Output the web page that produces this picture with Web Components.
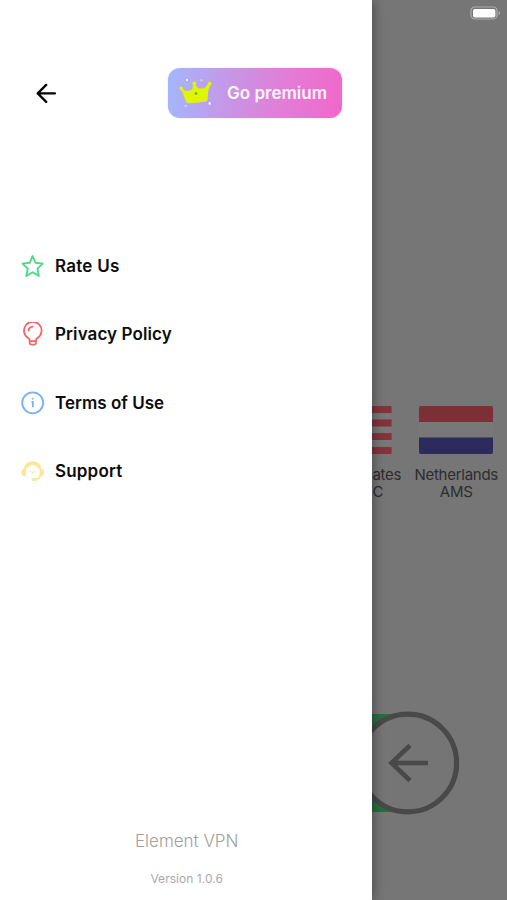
<!DOCTYPE html>
<html lang="en">
<head>
<meta charset="utf-8">
<title>Element VPN</title>
<style>
html,body{margin:0;height:100%;overflow:hidden;background:#767676}
body{font-family:Inter,"Liberation Sans",sans-serif}
</style>
</head>
<body>
<vpn-app></vpn-app>
<script>
const define = (name, html) => customElements.define(name, class extends HTMLElement {
  constructor() {
    super();
    const t = document.createElement('template');
    t.innerHTML = html;
    this.attachShadow({ mode: 'open' }).append(t.content.cloneNode(true));
  }
});

define('back-arrow', `
<style>:host{display:block;width:20px;height:20px}svg{display:block}</style>
<svg width="20" height="20" viewBox="0 0 20 20" fill="none" stroke="#050505" stroke-width="2.3" stroke-linecap="round" stroke-linejoin="round"><path d="M19 10.4H2M10.2 1.9L1.7 10.4l8.5 8.5"/></svg>`);

define('premium-button', `
<style>
:host{display:flex;align-items:center;box-sizing:border-box;width:174px;height:50px;border-radius:12px;padding-left:8px;
background:linear-gradient(97deg,#a5b5fb 3%,#c894e4 38%,#e37cd5 68%,#f068cc 98%);box-shadow:0 0 1px #c9a5e8}
svg{flex:none}
span{margin-left:12px;color:#fff4ff;font-size:17px;font-weight:600;line-height:22px;letter-spacing:.02px;white-space:nowrap}
</style>
<svg width="39" height="34" viewBox="0 0 39 34"><path d="M4.2 12.4L6.2 11.6Q8 15 10 15 14 14.8 16.4 13.2L17.2 8 19.6 8Q20.4 12.4 23.6 12.6L28.6 12.2 32.4 7.6 34.8 8Q33.2 11.6 32.4 14L31.4 24.4Q30.5 25.8 26 25.8L11.4 27Q10.2 26.6 9.6 24.4L6.8 17Z" fill="#e2f500"/><path d="M11.6 26.6Q21 26.8 31 24.4" fill="none" stroke="#dce456" stroke-width="1.2"/><g fill="#e2f500"><circle cx="5.2" cy="12.4" r="1.8"/><circle cx="18.3" cy="7.4" r="2"/><circle cx="33.7" cy="7.6" r="1.9"/></g><circle cx="20" cy="17.5" r="1.4" fill="#57bd3c"/><g fill="#fff"><circle cx="11" cy="4" r="1.1"/><circle cx="33.7" cy="27.4" r="1.2"/><circle cx="25.5" cy="4.2" r="1.3" opacity=".35"/><circle cx="9.6" cy="30" r="1.3" opacity=".35"/></g></svg>
<span><slot></slot></span>`);

define('menu-item', `
<style>
:host{display:flex;align-items:center;height:24px;gap:10px}
::slotted(svg){display:block;flex:none}
span{font-size:17px;font-weight:600;line-height:24px;letter-spacing:var(--track,.1px);color:#0c0c0c;white-space:nowrap}
</style>
<slot name="icon"></slot><span><slot></slot></span>`);

define('side-drawer', `
<style>
:host{display:flex;flex-direction:column;box-sizing:border-box;width:372.4px;height:900px;background:#fff;padding-top:68px;position:relative;z-index:2;box-shadow:1px 0 10px rgba(0,0,0,.3),0 0 14px rgba(0,0,0,.13)}
header{display:flex;align-items:center;justify-content:space-between;padding:0 30.4px 0 36px}
nav{display:flex;flex-direction:column;gap:44.4px;padding:136px 0 0 21px}
.rate{--track:.24px}.terms{--track:.02px}.support{--track:.18px}
footer{margin-top:auto;text-align:center;color:#aaa;padding-bottom:12px}
h1{font-size:17px;font-weight:300;line-height:22px;margin:0 0 18.2px;letter-spacing:0;padding-left:1px;color:#a0a0a0}
p{font-size:12px;line-height:18px;margin:0;letter-spacing:.05px;padding-left:1px}
</style>
<header><back-arrow></back-arrow><premium-button>Go premium</premium-button></header>
<nav>
<menu-item class="rate"><svg slot="icon" width="24" height="24" viewBox="0 0 24 24" fill="none" stroke="#4cda87" stroke-width="1.9" stroke-linejoin="round"><path d="M11.6 2L14.5 8.8l7.3.8-5.4 5 1.5 7.3-6.3-3.7-6.3 3.7 1.5-7.3-5.4-5 7.3-.8Z"/></svg>Rate Us</menu-item>
<menu-item><svg slot="icon" width="24" height="24" viewBox="0 0 24 24" fill="none" stroke="#f56364" stroke-width="1.8" stroke-linecap="round" stroke-linejoin="round"><path d="M8.6 19.2v-1.1Q8.4 16.8 6.8 15.8A8.8 8.8 0 1 1 16.8 15.8Q15.2 16.8 15 18.1v1.1ZM8.7 19.2v1.7a1.8 1.8 0 0 0 1.8 1.8h2.6a1.8 1.8 0 0 0 1.8-1.8v-1.7M7.5 8.6a4.5 4.5 0 0 1 4.1-4"/></svg>Privacy Policy</menu-item>
<menu-item class="terms"><svg slot="icon" width="24" height="24" viewBox="0 0 24 24" fill="none" stroke="#78aff5" stroke-width="1.8"><circle cx="11.7" cy="11.8" r="10.5"/><path d="M10.5 10.8h1.3v5.4"/><circle cx="11.7" cy="7.7" r=".6" stroke-width="1"/></svg>Terms of Use</menu-item>
<menu-item class="support"><svg slot="icon" width="24" height="24" viewBox="0 0 24 24" fill="none" stroke="#fae797" stroke-width="1.8" stroke-linecap="round"><path d="M4 10C4.6 5.2 7.8 3.2 11.7 3.2s7.1 2 7.7 6.8M5.5 8.8Q8.2 5 11.7 5T17.9 8.8M19.4 16.5c-.8 2.5-2.4 3.8-5 4"/><path d="M4.3 9.8v7.1c-2.4 0-3.6-1.4-3.6-3.5s1.2-3.6 3.6-3.6ZM19.1 9.8v7.1c2.4 0 3.6-1.4 3.6-3.5s-1.2-3.6-3.6-3.6Z" fill="#fae797" stroke-width="1"/><path d="M12 20.5h2.2" stroke-width="3.2"/><path d="M9 12.2h.5M13.4 12.2h.5M10.6 13.2q.9.4 1.8 0" stroke-width="1.2"/></svg>Support</menu-item>
</nav>
<footer><h1>Element VPN</h1><p>Version 1.0.6</p></footer>`);

define('status-battery', `
<style>:host{display:block;width:31px;height:14px}svg{display:block}</style>
<svg width="31" height="14" viewBox="0 0 31 14"><rect x="1" y="1" width="26" height="12" rx="3.6" fill="none" stroke="#adadad" stroke-width="1.2"/><rect x="3" y="3" width="22.4" height="8.4" rx="1.7" fill="#fff"/><path d="M28.6 5v4.2q1.5-.7 1.5-2.1T28.6 5Z" fill="#adadad"/></svg>`);

define('server-card', `
<style>
:host{display:flex;flex-direction:column;align-items:center;color:#2d2d2d}
span{margin-top:12.4px;font-size:15px;line-height:17px;text-align:var(--align,center);white-space:pre-line;letter-spacing:var(--track,0)}
</style>
<slot name="flag"></slot><span><slot></slot></span>`);

define('connect-slider', `
<style>:host{display:block;width:88px;height:104px}svg{display:block}</style>
<svg width="88" height="104" viewBox="0 0 88 104"><path d="M0 3h36v98H0Z" fill="#286d43"/><circle cx="35.8" cy="52" r="48.8" fill="#757575" stroke="#494949" stroke-width="5.2"/><path d="M56 52H20M38 34.5L19.5 52l18.5 17.5" fill="none" stroke="#494949" stroke-width="4.6"/></svg>`);

define('home-screen', `
<style>
:host{display:flex;flex-direction:column;box-sizing:border-box;width:134.6px;height:900px;background:#767676;overflow:hidden;padding-top:6px}
status-battery{align-self:flex-end;margin-right:6px}
.servers{display:flex;margin-top:385.6px;gap:8.8px}
.us{width:31px;align-items:flex-start;--align:left;--track:-.25px}
.nl{width:88px;--track:-.27px}
svg{display:block;flex:none}
connect-slider{margin-top:211px}
</style>
<status-battery></status-battery>
<div class="servers">
<server-card class="us"><svg slot="flag" width="20" height="48" viewBox="0 0 20 48"><path d="M0 0h18.4q1.2 0 1.2 1.2v45.6q0 1.2-1.2 1.2H0Z" fill="#787878"/><path d="M0 0h18.4q1.2 0 1.2 1.2V7H0ZM0 13.5h19.6v7H0ZM0 27h19.6v7H0ZM0 41h19.6v5.8q0 1.2-1.2 1.2H0Z" fill="#84333c"/></svg>ates
C</server-card>
<server-card class="nl"><svg slot="flag" width="74" height="48" viewBox="0 0 74 48"><rect width="74" height="48" rx="2" fill="#787878"/><path d="M2 0h70q2 0 2 2v14H0V2Q0 0 2 0Z" fill="#7a3035"/><path d="M0 31.5h74V46q0 2-2 2H2q-2 0-2-2Z" fill="#2d2a5e"/></svg>Netherlands
AMS</server-card>
</div>
<connect-slider></connect-slider>`);

define('vpn-app', `
<style>:host{display:flex;width:507px;height:900px;overflow:hidden}side-drawer,home-screen{flex:none}</style>
<side-drawer></side-drawer><home-screen></home-screen>`);
</script>
</body>
</html>
